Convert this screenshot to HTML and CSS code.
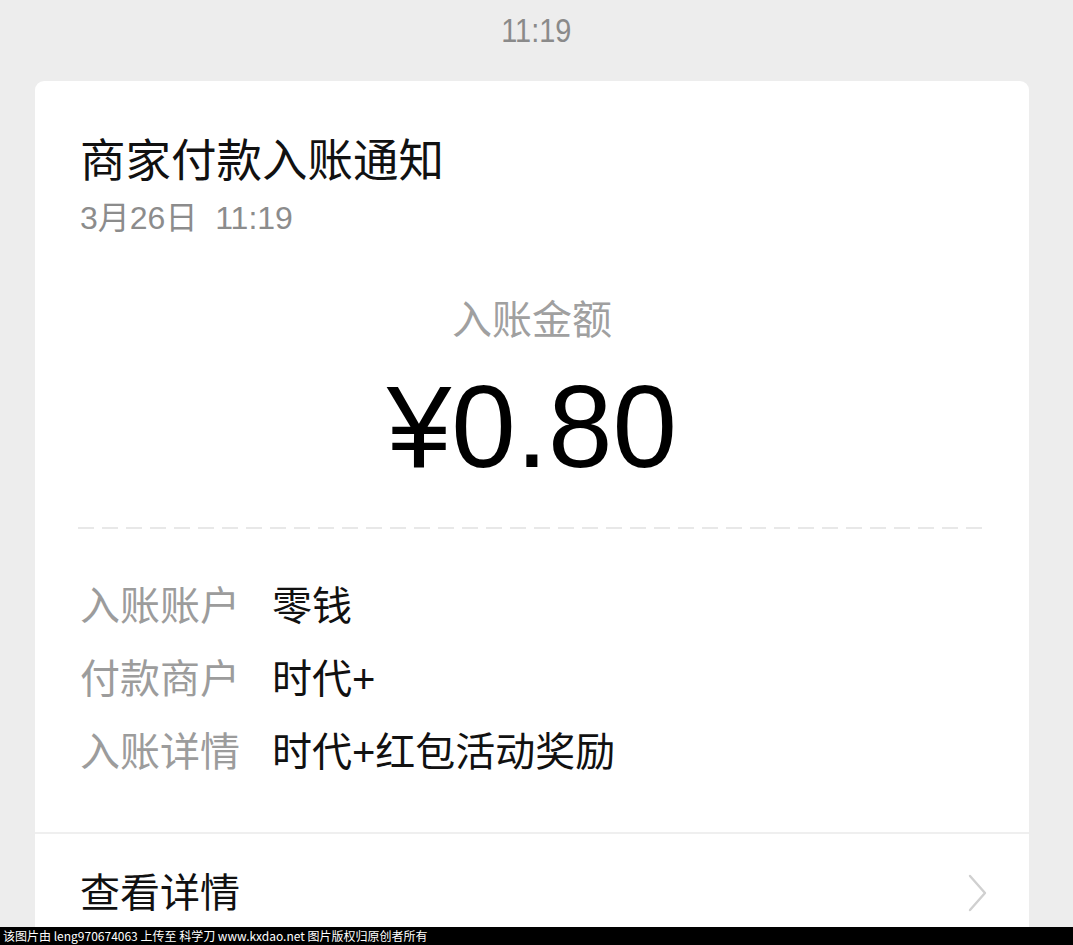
FILE: index.html
```html
<!DOCTYPE html>
<html lang="zh-CN">
<head>
<meta charset="utf-8">
<title>商家付款入账通知</title>
<link rel="stylesheet" href="styles.css">
</head>
<body>
<div class="page">
  <div class="time"><span class="time-text">11:19</span></div>
  <div class="card">
    <div class="title">商家付款入账通知</div>
    <div class="date">3月26日&nbsp;&nbsp;11:19</div>
    <div class="amount-label">入账金额</div>
    <div class="amount">¥0.80</div>
    <div class="dash"></div>
    <div class="rows">
      <div class="row"><span class="k">入账账户</span><span class="v">零钱</span></div>
      <div class="row"><span class="k">付款商户</span><span class="v">时代+</span></div>
      <div class="row"><span class="k">入账详情</span><span class="v">时代+红包活动奖励</span></div>
    </div>
    <div class="divider"></div>
    <div class="more">
      <span class="more-text">查看详情</span>
      <svg class="chev" width="22" height="40" viewBox="0 0 22 40"><path d="M3 3 L18 20 L3 37" fill="none" stroke="#d0d0d0" stroke-width="2.4" stroke-linecap="round" stroke-linejoin="round"/></svg>
    </div>
  </div>
  <div class="watermark">该图片由 leng970674063 上传至 科学刀 www.kxdao.net 图片版权归原创者所有</div>
</div>
</body>
</html>
```
FILE: styles.css
```css
html, body {
  margin: 0;
  padding: 0;
  background: #ededed;
}
body {
  font-family: "Liberation Sans", "Noto Sans CJK SC", sans-serif;
  width: 1073px;
  height: 945px;
  overflow: hidden;
}
.page {
  height: 945px;
  overflow: hidden;
}
.time {
  height: 81px;
  box-sizing: border-box;
  padding-top: 10px;
  line-height: 40px;
  text-align: center;
  font-size: 34px;
  color: #8a8a8a;
}
.time-text {
  display: inline-block;
  transform: scaleX(0.85);
}
.card {
  margin-left: 35px;
  width: 994px;
  background: #fff;
  border-radius: 9px 9px 0 0;
  padding-top: 51px;
  height: 900px;
  box-sizing: border-box;
}
.title {
  padding-left: 45px;
  font-size: 45.5px;
  line-height: 60px;
  color: #111;
}
.date {
  margin-top: 6px;
  padding-left: 45px;
  font-size: 32px;
  line-height: 40px;
  color: #8c8c8c;
}
.amount-label {
  margin-top: 57px;
  text-align: center;
  font-size: 40px;
  line-height: 50px;
  color: #a0a0a0;
}
.amount {
  margin-top: 22px;
  text-align: center;
  font-size: 116px;
  line-height: 120px;
  color: #000;
}
.dash {
  margin: 40px 41px 0 43px;
  height: 2px;
  background: repeating-linear-gradient(to right, #e8e8e8 0 16px, transparent 16px 24px);
}
.rows {
  margin-top: 41px;
  padding-left: 45px;
}
.row {
  display: flex;
  gap: 32px;
  font-size: 40px;
  line-height: 73px;
}
.k {
  color: #9c9c9c;
}
.v {
  color: #111;
}
.divider {
  margin-top: 43px;
  height: 2px;
  background: #efefef;
}
.more {
  margin-top: 24px;
  padding: 0 40px 0 45px;
  height: 70px;
  display: flex;
  align-items: center;
  justify-content: space-between;
}
.more-text {
  font-size: 40px;
  line-height: 70px;
  color: #111;
}
.watermark {
  position: fixed;
  left: 0;
  bottom: 0;
  width: 1073px;
  height: 18px;
  background: #000;
  color: #fff;
  font-size: 12px;
  line-height: 18px;
  padding-left: 3px;
  box-sizing: border-box;
  font-family: "Noto Sans CJK SC", sans-serif;
  white-space: nowrap;
}
```
